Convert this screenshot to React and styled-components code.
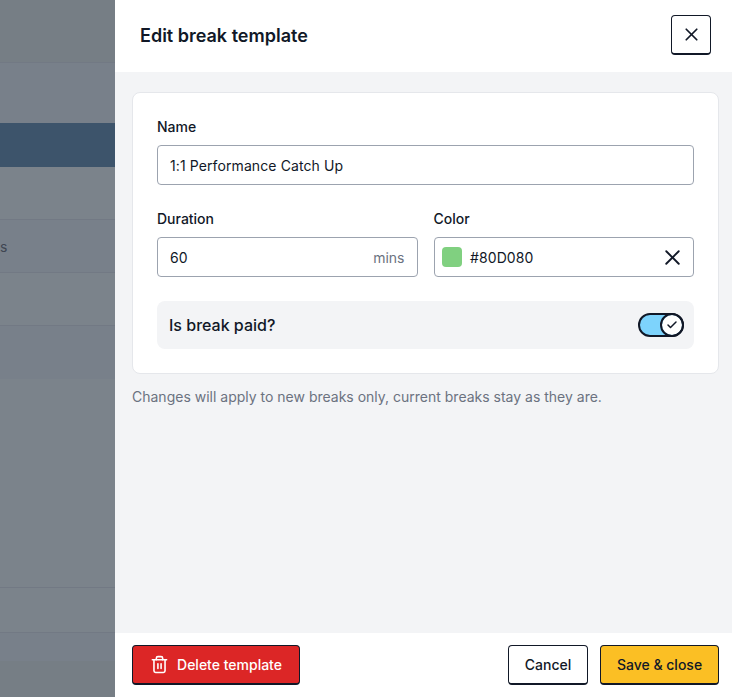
import styled, { createGlobalStyle } from 'styled-components';
import { Trash2, X, Check } from 'lucide-react';

const SLATE = `#78808a`;
const GREY = `#7b838b`;
const DULL = `#767e85`;

const BACKDROP_ROWS = [
  { height: 63, bg: DULL, line: true },
  { height: 60, bg: SLATE },
  { height: 44, bg: '#3d546b' },
  { height: 53, bg: GREY, line: true },
  { height: 53, bg: SLATE, line: true, text: 's' },
  { height: 53, bg: GREY, line: true },
  { height: 53, bg: SLATE },
  { height: 209, bg: GREY, line: true },
  { height: 45, bg: GREY, line: true },
  { height: 28, bg: SLATE },
  { height: 36, bg: DULL },
];

export default function App() {
  return (
    <Page>
      <GlobalStyle />
      <Backdrop>
        {BACKDROP_ROWS.map((row, i) => (
          <BackdropRow key={i} $height={row.height} $bg={row.bg} $line={row.line}>
            {row.text}
          </BackdropRow>
        ))}
      </Backdrop>
      <Drawer>
        <Header>
          <Title>Edit break template</Title>
          <CloseButton aria-label="Close">
            <X size={21} strokeWidth={2} />
          </CloseButton>
        </Header>
        <Body>
          <Card>
            <Field>
              <Label>Name</Label>
              <InputBox>
                <Value>1:1 Performance Catch Up</Value>
              </InputBox>
            </Field>
            <FieldRow>
              <Field>
                <Label>Duration</Label>
                <InputBox>
                  <Value>60</Value>
                  <Unit>mins</Unit>
                </InputBox>
              </Field>
              <Field>
                <Label>Color</Label>
                <ColorBox>
                  <Swatch />
                  <Value>#80D080</Value>
                  <ClearIcon>
                    <X size={25} strokeWidth={1.8} />
                  </ClearIcon>
                </ColorBox>
              </Field>
            </FieldRow>
            <ToggleRow>
              <ToggleLabel>Is break paid?</ToggleLabel>
              <Toggle>
                <Knob>
                  <Check size={12} strokeWidth={3} />
                </Knob>
              </Toggle>
            </ToggleRow>
          </Card>
          <Hint>Changes will apply to new breaks only, current breaks stay as they are.</Hint>
        </Body>
        <Footer>
          <Button $bg="#dc2626" $color="#fff" $width={168}>
            <Trash2 size={19} strokeWidth={2} />
            Delete template
          </Button>
          <FooterRight>
            <Button $bg="#fff" $color="#111827" $width={80}>Cancel</Button>
            <Button $bg="#fbbf24" $color="#111827" $width={119}>Save &amp; close</Button>
          </FooterRight>
        </Footer>
      </Drawer>
    </Page>
  );
}

const INK = `#111827`;
const BORDER = `#9ca3af`;

const GlobalStyle = createGlobalStyle`
  html, body {
    margin: 0;
    padding: 0;
    background: #fff;
  }
  * {
    box-sizing: border-box;
  }
`;

const Page = styled.div`
  display: flex;
  width: 732px;
  height: 697px;
  overflow: hidden;
  font-family: Inter, 'Liberation Sans', sans-serif;
  color: ${INK};
`;

const Backdrop = styled.div`
  width: 115px;
  flex-shrink: 0;
  display: flex;
  flex-direction: column;
`;

const BackdropRow = styled.div`
  height: ${(p) => p.$height}px;
  flex-shrink: 0;
  display: flex;
  align-items: center;
  font-size: 14px;
  color: #3f4652;
  background: ${(p) => p.$bg};
  border-bottom: 1px solid ${(p) => (p.$line ? '#727984' : 'transparent')};
`;

const Drawer = styled.div`
  flex: 1;
  display: flex;
  flex-direction: column;
  min-width: 0;
`;

const Header = styled.div`
  height: 72px;
  flex-shrink: 0;
  display: flex;
  align-items: center;
  justify-content: space-between;
  padding: 0 21px 2px 25px;
  background: #fff;
`;

const Title = styled.div`
  font-size: 18px;
  font-weight: 600;
`;

const CloseButton = styled.button`
  width: 40px;
  height: 40px;
  display: flex;
  align-items: center;
  justify-content: center;
  padding: 0;
  background: #fff;
  color: ${INK};
  border: 1px solid ${INK};
  border-bottom-width: 2px;
  border-radius: 4px;
`;

const Body = styled.div`
  flex: 1;
  display: flex;
  flex-direction: column;
  padding: 20px 13px 0 17px;
  background: #f3f4f6;
`;

const Card = styled.div`
  height: 282px;
  display: flex;
  flex-direction: column;
  gap: 16px;
  padding: 24px;
  background: #fff;
  border: 1px solid #e5e7eb;
  border-radius: 8px;
`;

const Field = styled.div`
  flex: 1;
  display: flex;
  flex-direction: column;
  gap: 8px;
  min-width: 0;
`;

const FieldRow = styled.div`
  display: flex;
  gap: 16px;
  margin-bottom: 8px;
`;

const Label = styled.div`
  font-size: 14px;
  line-height: 20px;
  font-weight: 500;
`;

const InputBox = styled.div`
  height: 40px;
  display: flex;
  align-items: center;
  justify-content: space-between;
  padding: 0 12px;
  background: #fff;
  border: 1px solid ${BORDER};
  border-radius: 4px;
`;

const ColorBox = styled(InputBox)`
  justify-content: flex-start;
  gap: 8px;
  padding: 0 8px 0 7.5px;
`;

const Value = styled.span`
  font-size: 14px;
  letter-spacing: 0.1px;
`;

const Unit = styled.span`
  font-size: 14px;
  color: #6b7280;
`;

const Swatch = styled.span`
  width: 20px;
  height: 20px;
  border-radius: 4px;
  background: #80d080;
`;

const ClearIcon = styled.span`
  display: flex;
  margin-left: auto;
  color: ${INK};
`;

const ToggleRow = styled.div`
  height: 48px;
  display: flex;
  align-items: center;
  justify-content: space-between;
  padding: 0 10px 0 12px;
  background: #f3f4f6;
  border-radius: 8px;
`;

const ToggleLabel = styled.span`
  font-size: 16px;
  font-weight: 500;
`;

const Toggle = styled.div`
  width: 46px;
  height: 24px;
  display: flex;
  align-items: center;
  justify-content: flex-end;
  background: #7dd3fc;
  border: 2px solid ${INK};
  border-radius: 12px;
`;

const Knob = styled.span`
  width: 20px;
  height: 20px;
  display: flex;
  align-items: center;
  justify-content: center;
  background: #fff;
  color: ${INK};
  outline: 2px solid ${INK};
  border-radius: 50%;
`;

const Hint = styled.p`
  margin: 13px 0 0;
  font-size: 14px;
  line-height: 20px;
  color: #6b7280;
`;

const Footer = styled.div`
  height: 64px;
  flex-shrink: 0;
  display: flex;
  align-items: flex-start;
  justify-content: space-between;
  padding: 12px 13px 0 17px;
  background: #fff;
`;

const FooterRight = styled.div`
  display: flex;
  gap: 12px;
`;

const Button = styled.button`
  width: ${(p) => p.$width}px;
  height: 40px;
  display: flex;
  align-items: center;
  justify-content: center;
  gap: 8px;
  padding: 0;
  font-family: inherit;
  font-size: 14px;
  font-weight: 500;
  background: ${(p) => p.$bg};
  color: ${(p) => p.$color};
  border: 1px solid ${INK};
  border-bottom-width: 2px;
  border-radius: 4px;
`;
